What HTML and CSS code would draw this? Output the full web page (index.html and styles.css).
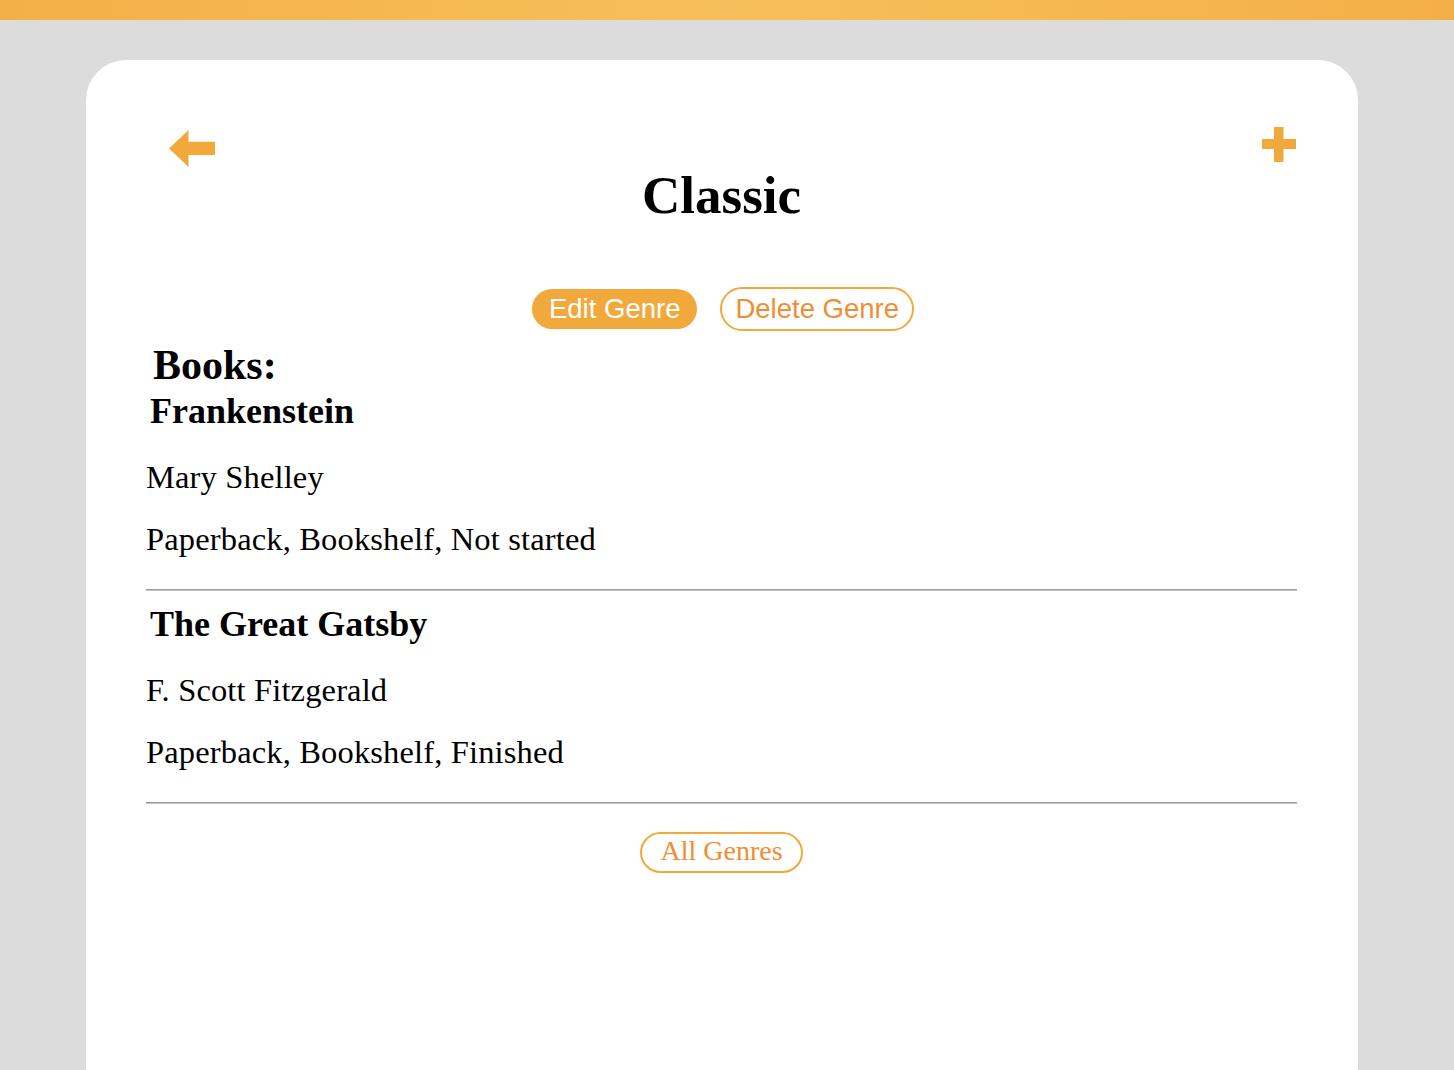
FILE: index.html
```html
<!DOCTYPE html>
<html lang="en">
<head>
<meta charset="utf-8">
<title>Classic</title>
<link rel="stylesheet" href="styles.css">
</head>
<body>
<div class="topbar"></div>
<main class="card">
  <header class="header">
    <a class="back" href="#" aria-label="Back">
      <svg width="47" height="37" viewBox="0 0 47 37"><polygon points="0,18.5 19.5,0 19.5,11.7 46,11.7 46,25 19.5,25 19.5,37" fill="#f2a93c"/></svg>
    </a>
    <h1 class="title">Classic</h1>
    <a class="add" href="#" aria-label="Add">
      <svg width="34" height="35" viewBox="0 0 34 35"><rect x="12" y="0" width="9.5" height="35" fill="#f2a93c"/><rect x="0" y="12" width="34" height="10" fill="#f2a93c"/></svg>
    </a>
  </header>
  <div class="actions">
    <button class="btn btn-fill">Edit Genre</button>
    <button class="btn btn-outline">Delete Genre</button>
  </div>
  <section class="books">
    <h2 class="books-heading">Books:</h2>
    <article class="book">
      <h3 class="book-title">Frankenstein</h3>
      <p class="book-line book-author">Mary Shelley</p>
      <p class="book-line book-meta">Paperback, Bookshelf, Not started</p>
      <hr class="divider">
    </article>
    <article class="book">
      <h3 class="book-title">The Great Gatsby</h3>
      <p class="book-line book-author">F. Scott Fitzgerald</p>
      <p class="book-line book-meta">Paperback, Bookshelf, Finished</p>
      <hr class="divider">
    </article>
  </section>
  <div class="footer-actions">
    <a class="all-genres" href="#">All Genres</a>
  </div>
</main>
</body>
</html>
```
FILE: styles.css
```css
html, body {
  margin: 0;
  padding: 0;
}
body {
  background: #dcdcdc;
  font-family: "Liberation Serif", "Times New Roman", serif;
  color: #000;
  overflow: hidden;
}
.topbar {
  height: 20px;
  background: linear-gradient(to right, #f4af48 0%, #f7bf5b 50%, #f4af48 100%);
}
.card {
  box-sizing: border-box;
  width: 1272px;
  min-height: 1010px;
  margin: 40px 0 0 86px;
  padding: 67px 61px 0 60px;
  background: #fff;
  border-radius: 40px 40px 0 0;
}
.header {
  display: grid;
  grid-template-columns: 1fr auto 1fr;
  align-items: start;
}
.back {
  justify-self: start;
  display: block;
  margin: 3px 0 0 23px;
  line-height: 0;
}
.add {
  justify-self: end;
  display: block;
  margin: 0 1px 0 0;
  line-height: 0;
}
.title {
  margin: 38px 0 0;
  font-size: 53px;
  line-height: 60px;
  font-weight: bold;
  text-align: center;
}
.actions {
  display: flex;
  justify-content: center;
  align-items: center;
  gap: 23px;
  margin-top: 62px;
  padding-left: 3px;
}
.btn {
  font-family: "Liberation Sans", Arial, sans-serif;
  font-size: 27.5px;
  line-height: 32px;
  border-radius: 22px;
  cursor: pointer;
  margin: 0;
}
.btn-fill {
  background: #f2a93c;
  color: #fff;
  border: none;
  padding: 4px 17px 4px;
}
.btn-outline {
  background: #fff;
  color: #ef8e33;
  border: 2px solid #f2a93c;
  padding: 4px 13px 4px;
}
.books-heading {
  margin: 12px 0 0 7px;
  font-size: 42px;
  line-height: 44px;
  font-weight: bold;
}
.book {
  padding-top: 13px;
}
.book:first-of-type {
  padding-top: 4px;
}
.book-title {
  margin: 0 0 28px 4px;
  font-size: 36px;
  line-height: 40px;
  font-weight: bold;
}
.book-line {
  margin: 0;
  font-size: 32.5px;
  line-height: 36px;
  letter-spacing: 0.15px;
}
.book-meta {
  margin-top: 26px;
}
.divider {
  margin: 32px 0 0;
  height: 0;
  border: none;
  border-top: 1px solid #9a9a9a;
  border-bottom: 1px solid #c6c6c6;
}
.footer-actions {
  display: flex;
  justify-content: center;
  margin-top: 28px;
}
.all-genres {
  display: block;
  font-size: 28px;
  line-height: 33px;
  padding: 0 18.5px 4px;
  border: 2px solid #f2a93c;
  border-radius: 21px;
  color: #ef8e33;
  text-decoration: none;
}
```
